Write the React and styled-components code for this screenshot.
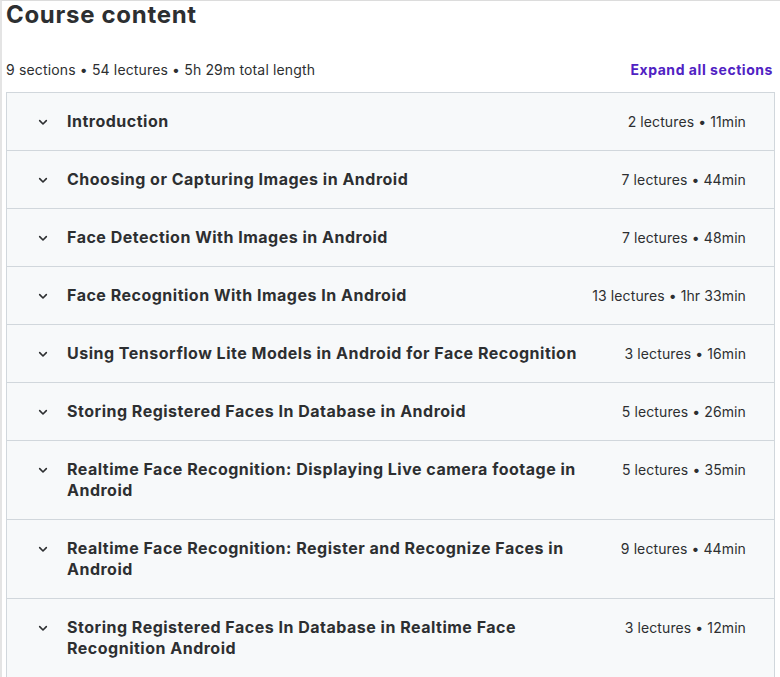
import React from 'react'
import styled, { createGlobalStyle } from 'styled-components'

const GlobalStyle = createGlobalStyle`
  body {
    margin: 0;
    background: #ffffff;
    font-family: Inter, "Noto Sans", sans-serif;
    color: #2d2f31;
  }
`

const Page = styled.main`
  min-height: 677px;
  box-sizing: border-box;
  border-top: 1px solid #dcdcdc;
  border-left: 2px solid #e4e4e4;
  padding: 0 5px 0 4px;
`

const Title = styled.h2`
  margin: 0;
  font-size: 24px;
  line-height: 28px;
  font-weight: 700;
  letter-spacing: 0.7px;
`

const Summary = styled.div`
  display: flex;
  align-items: center;
  justify-content: space-between;
  margin-top: 29px;
  height: 22px;
  font-size: 14px;
`

const Stats = styled.span`
  color: #2d2f31;
  letter-spacing: 0.15px;
`

const ExpandButton = styled.button`
  border: none;
  background: none;
  padding: 0 2px 0 0;
  font-family: inherit;
  font-size: 14px;
  font-weight: 700;
  letter-spacing: 0.55px;
  color: #5022c3;
  cursor: pointer;
`

const Sections = styled.div`
  margin-top: 12px;
  border: 1px solid #d1d7dc;
  border-bottom: none;
`

const Row = styled.div`
  display: flex;
  align-items: flex-start;
  gap: 16px;
  padding: 18px 28px;
  background: #f7f9fa;
  border-bottom: 1px solid #d1d7dc;
`

const Chevron = styled.svg`
  flex: 0 0 16px;
  width: 16px;
  height: 16px;
  margin-top: 3px;
  color: #2d2f31;
`

const SectionTitle = styled.div`
  flex: 1;
  font-size: 16px;
  line-height: 21px;
  font-weight: 700;
  letter-spacing: 0.5px;
`

const Meta = styled.span`
  flex: none;
  margin-left: 16px;
  font-size: 14px;
  line-height: 21px;
  letter-spacing: 0.1px;
  white-space: nowrap;
`

const sections = [
  ['Introduction', '2 lectures • 11min'],
  ['Choosing or Capturing Images in Android', '7 lectures • 44min'],
  ['Face Detection With Images in Android', '7 lectures • 48min'],
  ['Face Recognition With Images In Android', '13 lectures • 1hr 33min'],
  ['Using Tensorflow Lite Models in Android for Face Recognition', '3 lectures • 16min'],
  ['Storing Registered Faces In Database in Android', '5 lectures • 26min'],
  ['Realtime Face Recognition: Displaying Live camera footage in Android', '5 lectures • 35min'],
  ['Realtime Face Recognition: Register and Recognize Faces in Android', '9 lectures • 44min'],
  ['Storing Registered Faces In Database in Realtime Face Recognition Android', '3 lectures • 12min'],
]

function ChevronDown() {
  return (
    <Chevron viewBox="0 0 24 24" fill="none" stroke="currentColor" strokeWidth="2.4" strokeLinecap="round" strokeLinejoin="round">
      <path d="M7 10l5 5 5-5" />
    </Chevron>
  )
}

export default function App() {
  return (
    <Page>
      <GlobalStyle />
      <Title>Course content</Title>
      <Summary>
        <Stats>9 sections • 54 lectures • 5h 29m total length</Stats>
        <ExpandButton>Expand all sections</ExpandButton>
      </Summary>
      <Sections>
        {sections.map(([name, meta]) => (
          <Row key={name}>
            <ChevronDown />
            <SectionTitle>{name}</SectionTitle>
            <Meta>{meta}</Meta>
          </Row>
        ))}
      </Sections>
    </Page>
  )
}
